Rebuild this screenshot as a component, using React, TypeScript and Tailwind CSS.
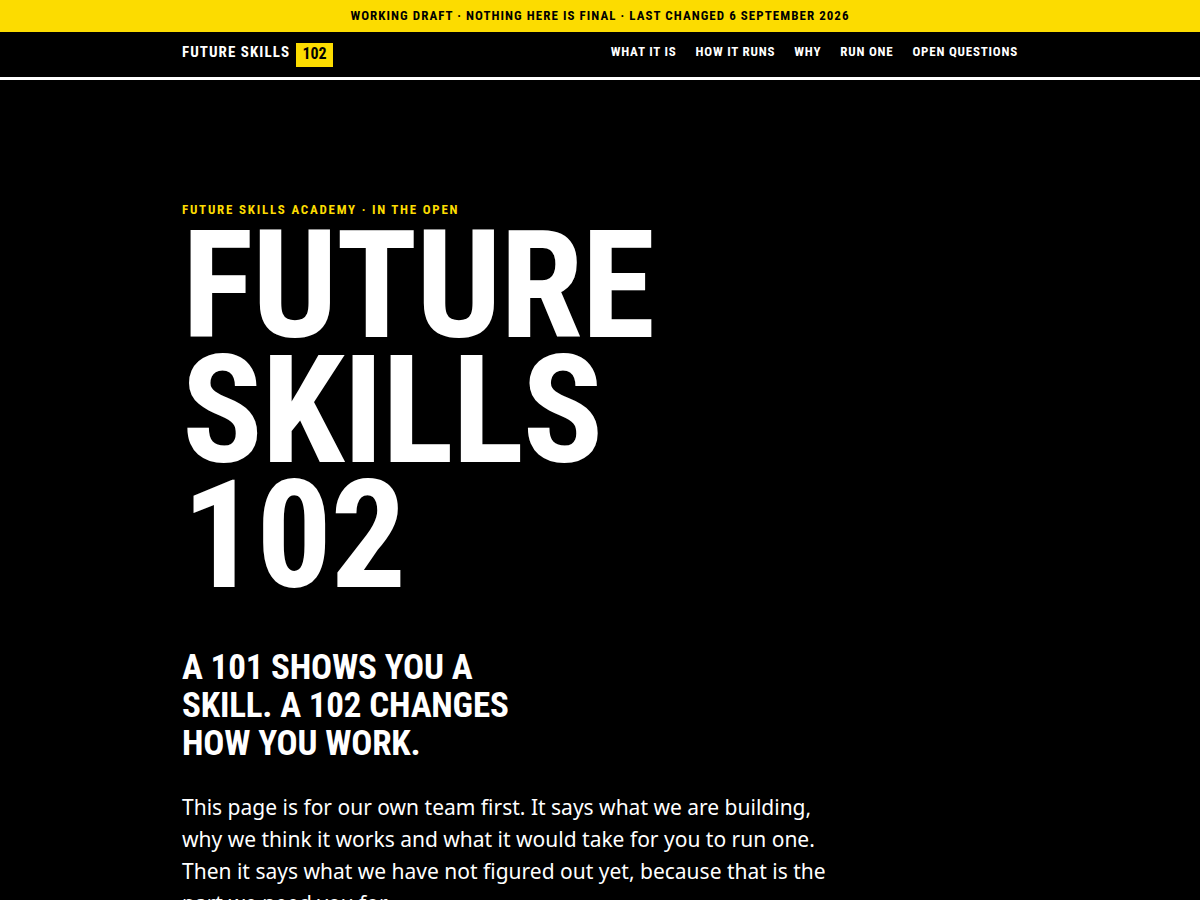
import React from "react";

export default function App() {
  const nav = ["WHAT IT IS", "HOW IT RUNS", "WHY", "RUN ONE", "OPEN QUESTIONS"];
  return (
    <div className="min-h-[900px] bg-black font-['Noto_Sans',sans-serif] text-white">
      <div className="flex h-[32px] items-center justify-center bg-[#fcdc00] font-['Roboto_Condensed',sans-serif] text-[13px] font-bold tracking-[0.08em] text-black">
        WORKING DRAFT · NOTHING HERE IS FINAL · LAST CHANGED 6 SEPTEMBER 2026
      </div>
      <header className="border-b-[3px] border-white bg-black">
        <div className="mx-auto flex h-[45px] w-[836px] items-center justify-between font-['Roboto_Condensed',sans-serif]">
          <div className="flex items-center gap-[6px]">
            <span className="pb-[4px] text-[15px] font-bold tracking-[0.07em] text-white">FUTURE SKILLS</span>
            <span className="flex h-[24px] w-[37px] items-center justify-center bg-[#fcdc00] pb-[1px] text-[16px] font-bold text-black">102</span>
          </div>
          <nav className="flex items-center gap-[19px] pb-[6px] text-[13px] font-bold tracking-[0.06em] text-white">
            {nav.map((n) => (
              <a key={n} href="#">{n}</a>
            ))}
          </nav>
        </div>
      </header>
      <main className="mx-auto w-[836px] pt-[120px]">
        <p className="font-['Roboto_Condensed',sans-serif] text-[13px] font-bold tracking-[0.135em] text-[#fcdc00]">
          FUTURE SKILLS ACADEMY · IN THE OPEN
        </p>
        <h1 className="mt-[4px] font-['Roboto_Condensed',sans-serif] text-[150px] font-bold leading-[125px] tracking-[-0.01em] text-white">
          FUTURE
          <br />
          SKILLS
          <br />
          102
        </h1>
        <h2 className="mt-[50px] max-w-[340px] font-['Roboto_Condensed',sans-serif] text-[35px] font-bold leading-[38px] tracking-[-0.005em] text-white">
          A 101 SHOWS YOU A SKILL. A 102 CHANGES HOW YOU WORK.
        </h2>
        <p className="mt-[28px] max-w-[660px] text-[21px] leading-[32px] text-white">
          This page is for our own team first. It says what we are building, why we think it works and what it would take for you to run one. Then it says what we have not figured out yet, because that is the part we need you for.
        </p>
      </main>
    </div>
  );
}
